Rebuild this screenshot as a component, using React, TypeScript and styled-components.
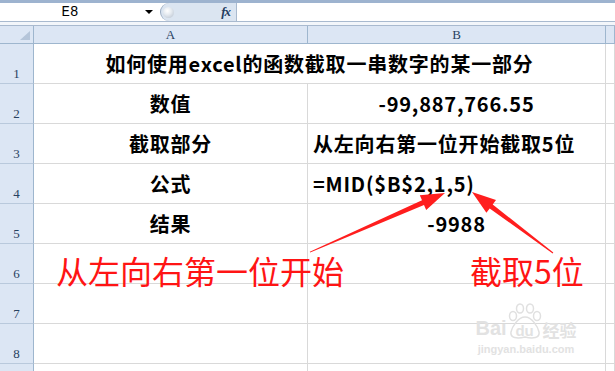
import React from 'react';
import styled, { createGlobalStyle } from 'styled-components';

const GlobalStyle = createGlobalStyle`
  html, body { margin: 0; padding: 0; background: #fff; }
  body { overflow: hidden; }
  * { box-sizing: border-box; }
`;

const Page = styled.div`
  position: relative;
  width: 615px;
  height: 371px;
  overflow: hidden;
  background: #fff;
  font-family: "Noto Sans CJK SC", "Noto Sans", sans-serif;
`;

const TopStrip = styled.div`
  height: 3px;
  background: #9db3cf;
`;

const FormulaBar = styled.div`
  display: flex;
  height: 19px;
  border-bottom: 1px solid #a9bacf;
`;

const NameBox = styled.div`
  width: 160px;
  display: flex;
  align-items: center;
  background: #fff;
`;

const NameText = styled.span`
  width: 140px;
  text-align: center;
  font: 14px "Liberation Mono", monospace;
  color: #000;
`;

const DropArrow = styled.span`
  width: 0;
  height: 0;
  margin-left: 5px;
  border-left: 4px solid transparent;
  border-right: 4px solid transparent;
  border-top: 4px solid #000;
`;

const FxArea = styled.div`
  width: 77px;
  display: flex;
  align-items: center;
  justify-content: space-between;
  padding: 0 6px 0 2px;
  background: #dbe5f1;
  border-left: 1px solid #9aabc0;
  border-right: 1px solid #a9bacf;
  border-radius: 9px 0 0 9px;
`;

const Knob = styled.span`
  width: 11px;
  height: 11px;
  border-radius: 50%;
  background: radial-gradient(circle at 40% 35%, #ffffff 0%, #e6ebf1 40%, #b4bfcc 100%);
`;

const Fx = styled.span`
  font: italic bold 13px "Liberation Serif", serif;
  color: #233c5e;
  letter-spacing: -1px;
`;

const FormulaInput = styled.div`
  flex: 1;
  background: #fff;
`;

const GapStrip = styled.div`
  height: 4px;
  background: #f3f6fa;
  border-bottom: 1px solid #a9bacf;
`;

const Sheet = styled.div`
  display: grid;
  grid-template-columns: 34px 274px 298px 1fr;
  grid-template-rows: 18px repeat(9, 40px);
`;

const Corner = styled.div`
  position: relative;
  background: #dce6f4;
  border-right: 1px solid #9eb6ce;
  border-bottom: 1px solid #9eb6ce;
`;

const CornerTriangle = styled.span`
  position: absolute;
  right: 3px;
  bottom: 3px;
  width: 0;
  height: 0;
  border-left: 10px solid transparent;
  border-bottom: 9px solid #b5c5d9;
`;

const ColHead = styled.div`
  display: flex;
  align-items: center;
  justify-content: center;
  background: #dce6f4;
  border-right: 1px solid #9eb6ce;
  border-bottom: 1px solid #9eb6ce;
  font: 13px "Liberation Serif", serif;
  color: #27415f;
`;

const RowHead = styled.div`
  display: flex;
  align-items: flex-end;
  justify-content: center;
  padding-bottom: 1px;
  background: #dce6f4;
  border-right: 1px solid #9eb6ce;
  border-bottom: 1px solid #b9c9dc;
  font: 13px "Liberation Serif", serif;
  color: #27415f;
`;

const Cell = styled.div<{ $align?: 'left' | 'center'; $span?: number }>`
  display: flex;
  align-items: center;
  justify-content: ${(p) => (p.$align === 'left' ? 'flex-start' : 'center')};
  padding-left: ${(p) => (p.$align === 'left' ? '5px' : '0')};
  grid-column: span ${(p) => p.$span ?? 1};
  border-right: 1px solid #d9d9d9;
  border-bottom: 1px solid #d9d9d9;
  font-family: "Noto Sans CJK SC", "Noto Sans", sans-serif;
  font-weight: 700;
  font-size: 20px;
  letter-spacing: 0.8px;
  color: #000;
  white-space: nowrap;
`;

const Callout = styled.div<{ $x: number; $y: number }>`
  position: absolute;
  left: ${(p) => p.$x}px;
  top: ${(p) => p.$y}px;
  font-family: "Noto Sans CJK SC", sans-serif;
  font-weight: 400;
  font-size: 32px;
  line-height: 1;
  color: #ff1414;
  white-space: nowrap;
`;

const ArrowLayer = styled.svg`
  position: absolute;
  left: 0;
  top: 0;
  pointer-events: none;
`;

const Watermark = styled.div`
  position: absolute;
  left: 470px;
  top: 303px;
  width: 112px;
  display: flex;
  flex-direction: column;
  align-items: center;
  color: #e2e2e2;
  pointer-events: none;
`;

const LogoRow = styled.div`
  display: flex;
  align-items: flex-end;
  font-family: "Liberation Sans", sans-serif;
  font-weight: 700;
  font-size: 20px;
  line-height: 1;
`;

const PawBox = styled.span`
  position: relative;
  display: inline-flex;
  justify-content: center;
  width: 36px;
  padding-top: 20px;
  font-size: 15px;
`;

const PawIcon = styled.svg`
  position: absolute;
  left: 0;
  top: 0;
`;

const PawLabel = styled.span`
  position: relative;
`;

const LogoCJK = styled.span`
  font-family: "Noto Sans CJK SC", sans-serif;
  font-weight: 700;
  font-size: 17px;
`;

const LogoUrl = styled.div`
  margin-top: 6px;
  font-family: "Liberation Sans", sans-serif;
  font-weight: 700;
  font-size: 11px;
  line-height: 1;
`;

type Row = { a?: string; b?: string; bAlign?: 'left' | 'center'; merged?: string };

const rows: Row[] = [
  { merged: '如何使用excel的函数截取一串数字的某一部分' },
  { a: '数值', b: '-99,887,766.55' },
  { a: '截取部分', b: '从左向右第一位开始截取5位', bAlign: 'left' },
  { a: '公式', b: '=MID($B$2,1,5)', bAlign: 'left' },
  { a: '结果', b: '-9988' },
  {},
  {},
  {},
  {},
];

export default function App() {
  return (
    <Page>
      <GlobalStyle />
      <TopStrip />
      <FormulaBar>
        <NameBox>
          <NameText>E8</NameText>
          <DropArrow />
        </NameBox>
        <FxArea>
          <Knob />
          <Fx>fx</Fx>
        </FxArea>
        <FormulaInput />
      </FormulaBar>
      <GapStrip />
      <Sheet>
        <Corner>
          <CornerTriangle />
        </Corner>
        <ColHead>A</ColHead>
        <ColHead>B</ColHead>
        <ColHead />
        {rows.map((r, i) => (
          <React.Fragment key={i}>
            <RowHead>{i < 8 ? i + 1 : ''}</RowHead>
            {r.merged ? (
              <Cell $span={2}>{r.merged}</Cell>
            ) : (
              <>
                <Cell>{r.a}</Cell>
                <Cell $align={r.bAlign}>{r.b}</Cell>
              </>
            )}
            <Cell />
          </React.Fragment>
        ))}
      </Sheet>

      <ArrowLayer width={615} height={371} viewBox="0 0 615 371">
        <polygon
          fill="#ff1e1e"
          points="309.8,251.8 422.0,200.3 419.8,195.3 445,193 426.2,209.9 424.0,204.9 310.2,252.5"
        />
        <polygon
          fill="#ff1e1e"
          points="553.3,252.6 492.7,204.4 496.0,200.0 472,192 486.4,212.8 489.7,208.4 552.7,253.4"
        />
      </ArrowLayer>

      <Callout $x={56} $y={254}>从左向右第一位开始</Callout>
      <Callout $x={470} $y={254}>截取5位</Callout>

      <Watermark>
        <LogoRow>
          <span>Bai</span>
          <PawBox>
            <PawIcon width={36} height={36} viewBox="0 0 36 36">
              <g fill="none" stroke="#e0e0e0" strokeWidth={1.5}>
                <ellipse cx={6} cy={13} rx={3.5} ry={4.5} />
                <ellipse cx={13} cy={5.5} rx={3.5} ry={4.5} />
                <ellipse cx={23} cy={5.5} rx={3.5} ry={4.5} />
                <ellipse cx={30} cy={13} rx={3.5} ry={4.5} />
                <path d="M18 14 C11 14 5 24 4 29 C3 35 10 36 18 34 C26 36 33 35 32 29 C31 24 25 14 18 14 Z" />
              </g>
            </PawIcon>
            <PawLabel>du</PawLabel>
          </PawBox>
          <LogoCJK>经验</LogoCJK>
        </LogoRow>
        <LogoUrl>jingyan.baidu.com</LogoUrl>
      </Watermark>
    </Page>
  );
}
